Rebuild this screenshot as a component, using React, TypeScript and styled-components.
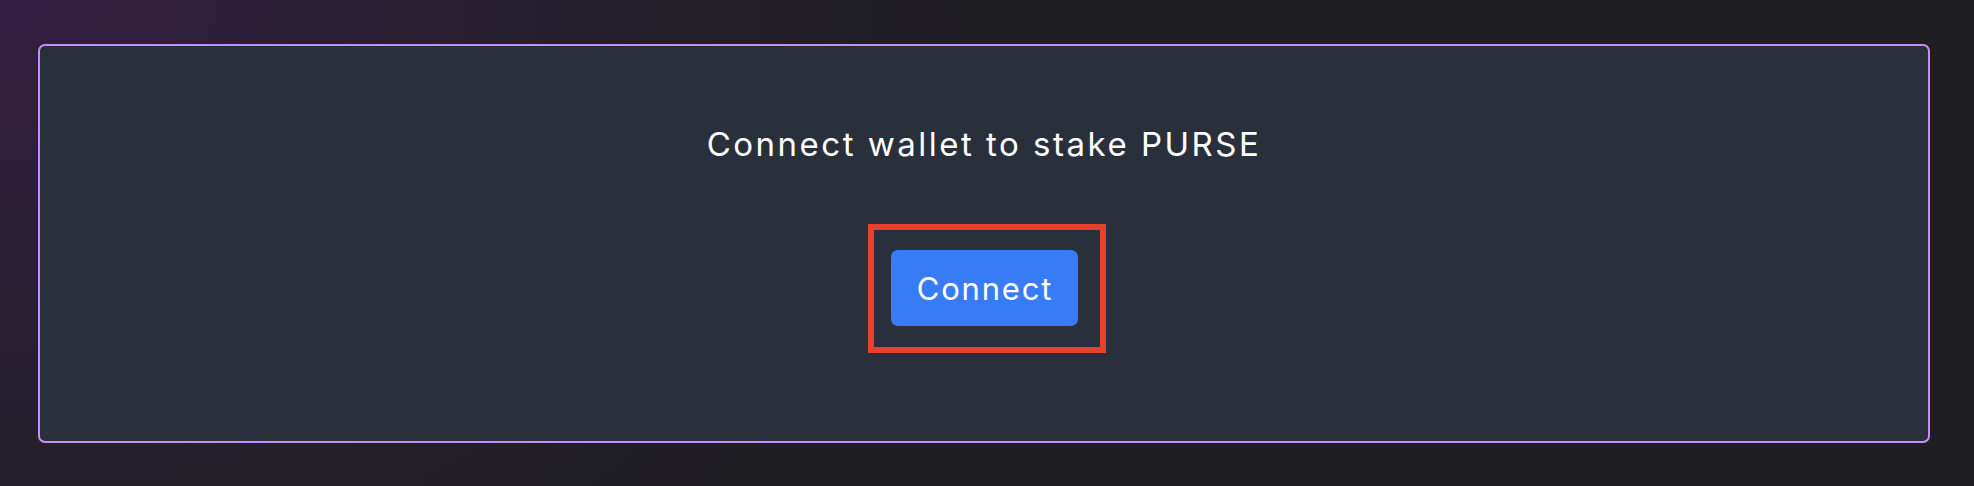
import React from "react";
import styled, { createGlobalStyle } from "styled-components";

const GlobalStyle = createGlobalStyle`
  html, body {
    margin: 0;
    padding: 0;
  }
  body {
    width: 1974px;
    height: 486px;
    overflow: hidden;
    background-color: #1f1e23;
    background-image: radial-gradient(ellipse 1000px 750px at 0% 0%, #331e41 0%, #2b1f37 30%, #231f29 65%, #1f1e23 100%);
    font-family: Inter, "Noto Sans", sans-serif;
  }
`;

const Page = styled.main`
  box-sizing: border-box;
  width: 1974px;
  height: 486px;
  padding: 44px 44px 43px 38px;
`;

const Card = styled.section`
  box-sizing: border-box;
  height: 399px;
  background: #2a303b;
  border: 2px solid #c58df9;
  border-radius: 7px;
  display: flex;
  flex-direction: column;
  align-items: center;
  padding-top: 83px;
`;

const Title = styled.h2`
  margin: 0;
  font-family: Inter, "Noto Sans", sans-serif;
  font-weight: 400;
  font-size: 33px;
  line-height: 31px;
  color: #ffffff;
  letter-spacing: 2.5px;
`;

const ButtonWrap = styled.div`
  position: relative;
  margin-top: 90px;
`;

const ConnectButton = styled.button`
  box-sizing: border-box;
  width: 187px;
  height: 76px;
  border: none;
  border-radius: 7px;
  background: #377cf6;
  color: #ffffff;
  font-family: Inter, "Noto Sans", sans-serif;
  font-size: 31px;
  font-weight: 400;
  letter-spacing: 1.8px;
  text-indent: 1.8px;
  cursor: pointer;
  padding: 0;
`;

const Highlight = styled.div`
  position: absolute;
  left: -23px;
  top: -26px;
  right: -28px;
  bottom: -27px;
  border: 6px solid #e8412b;
  pointer-events: none;
`;

export default function App() {
  return (
    <>
      <GlobalStyle />
      <Page>
        <Card>
          <Title>Connect wallet to stake PURSE</Title>
          <ButtonWrap>
            <ConnectButton>Connect</ConnectButton>
            <Highlight />
          </ButtonWrap>
        </Card>
      </Page>
    </>
  );
}
